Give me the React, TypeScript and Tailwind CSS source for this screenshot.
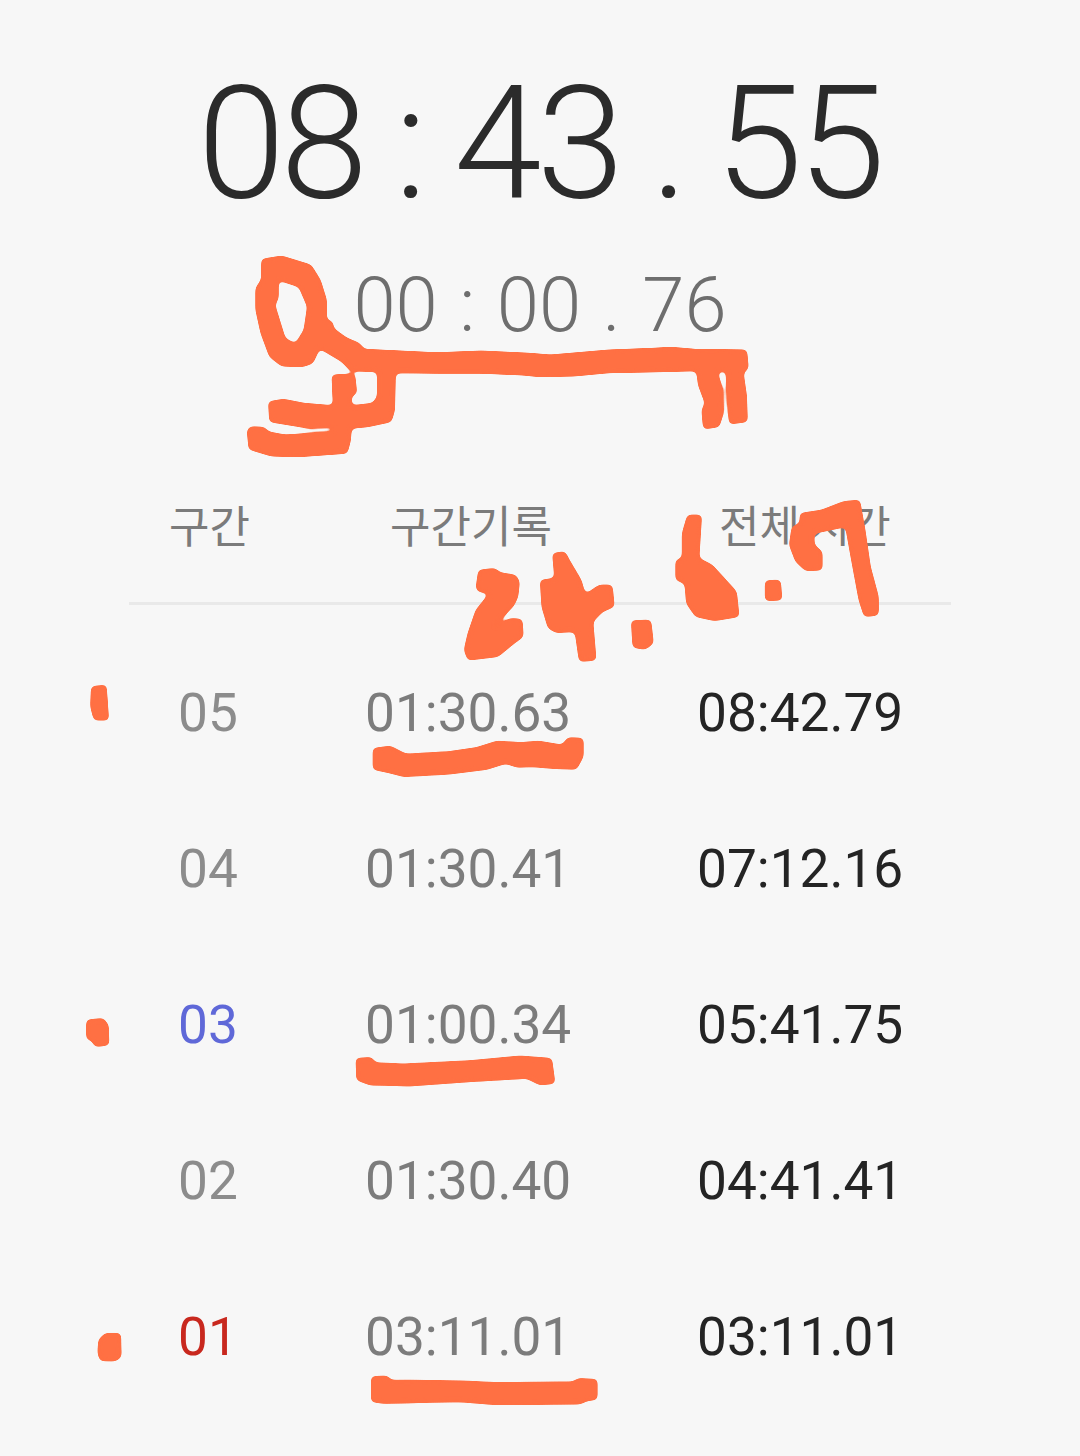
const laps = [
  { no: "05", noColor: "text-[#8c8c8c]", split: "01:30.63", total: "08:42.79" },
  { no: "04", noColor: "text-[#8c8c8c]", split: "01:30.41", total: "07:12.16" },
  { no: "03", noColor: "text-[#5f68d8]", split: "01:00.34", total: "05:41.75" },
  { no: "02", noColor: "text-[#8c8c8c]", split: "01:30.40", total: "04:41.41" },
  { no: "01", noColor: "text-[#c8281e]", split: "03:11.01", total: "03:11.01" },
];

// hand drawn marks on top of the screenshot, traced from the crops
const Scribbles = () => (
  <svg
    className="absolute left-0 top-0 pointer-events-none"
    width="1080"
    height="1456"
    viewBox="0 0 1080 1456"
    fill="#ff7043"
    stroke="#ff7043"
    strokeWidth="3"
    strokeLinejoin="round"
    fillRule="evenodd"
  >
    <defs>
      {/* blur + threshold rounds off the polygon corners like a finger stroke */}
      <filter id="marker" x="0" y="0" width="100%" height="100%" colorInterpolationFilters="sRGB">
        <feGaussianBlur stdDeviation="2.4" />
        <feColorMatrix values="1 0 0 0 0 0 1 0 0 0 0 0 1 0 0 0 0 0 9 -4" />
      </filter>
    </defs>
    <g filter="url(#marker)">
      <g transform="translate(230 240) scale(0.3444 0.3333)">
        <path d="M92 58 L150 48 L235 75 L262 120 L280 180 L280 240 L298 245 L300 265 L340 295 L375 310 L390 328 L600 338 L730 333 L870 340 L930 345 L1100 330 L1230 325 L1280 322 L1350 328 L1500 330 L1505 385 L1490 398 L1500 470 L1502 545 L1450 552 L1445 480 L1440 392 L1415 395 L1430 450 L1432 520 L1420 560 L1375 567 L1370 510 L1380 490 L1360 435 L1355 392 L1250 395 L1100 398 L1000 408 L900 410 L850 405 L730 400 L600 400 L480 398 L478 510 L468 545 L400 560 L352 565 L350 600 L340 640 L200 650 L120 648 L55 628 L50 570 L60 560 L100 562 L110 575 L160 585 L298 575 L300 560 L230 565 L115 545 L112 485 L155 478 L215 490 L300 497 L296 405 L362 402 L368 460 L352 468 L352 497 L415 490 L428 470 L428 395 L350 392 L325 365 L260 325 L240 370 L210 380 L150 378 L115 350 L90 280 L75 210 L75 145 L92 118 Z M140 120 L200 140 L225 200 L215 270 L190 312 L160 295 L130 195 L140 175 Z" />
      </g>
      <g transform="translate(120 490) scale(0.5357 0.3333)">
        <path d="M670 240 L700 235 L708 248 L738 255 L745 275 L742 320 L735 345 L712 385 L695 415 L730 385 L750 388 L752 440 L735 460 L705 500 L650 510 L643 480 L650 430 L665 360 L690 310 L670 305 L665 295 Z" />
        <path d="M808 190 L830 185 L838 210 L860 270 L868 315 L895 285 L918 285 L922 350 L900 365 L882 395 L888 510 L858 515 L850 425 L815 428 L800 415 L788 350 L785 270 L812 265 Z" />
        <path d="M955 392 L990 390 L995 460 L980 478 L958 472 Z" />
        <path d="M1060 75 L1085 75 L1080 205 L1105 225 L1150 305 L1155 380 L1110 392 L1075 380 L1058 340 L1055 280 L1038 270 L1038 210 L1050 205 L1050 130 Z" />
        <path d="M1205 272 L1232 270 L1235 330 L1205 332 Z" />
        <path d="M1270 70 L1310 60 L1350 35 L1380 30 L1390 120 L1400 230 L1415 320 L1415 375 L1390 380 L1380 330 L1365 200 L1355 110 L1295 130 L1295 165 L1310 185 L1310 240 L1280 242 L1262 215 L1250 165 L1255 110 L1270 100 Z" />
      </g>
      <g transform="translate(70 670) scale(0.3444 0.3333)">
        <path d="M62 50 L105 45 L112 150 L70 150 L60 110 Z" />
        <path d="M880 235 L930 228 L975 252 L1100 245 L1180 233 L1240 213 L1310 218 L1360 213 L1430 225 L1445 203 L1490 205 L1490 260 L1470 298 L1400 295 L1340 290 L1300 292 L1265 280 L1210 298 L1100 312 L970 320 L925 308 L880 298 Z" />
      </g>
      <g transform="translate(70 1000) scale(0.3333)">
        <path d="M50 60 L100 55 L115 75 L117 135 L75 140 L65 120 L50 118 Z" />
        <path d="M858 175 L905 172 L915 188 L1000 192 L1200 182 L1350 168 L1445 175 L1455 250 L1410 255 L1370 235 L1200 245 L1020 258 L900 255 L860 240 Z" />
      </g>
      <g transform="translate(80 1320) scale(0.338 0.3333)">
        <path d="M55 60 L75 40 L120 40 L122 110 L105 123 L60 122 L53 100 Z" />
        <path d="M862 170 L910 168 L918 180 L1130 183 L1240 188 L1460 185 L1475 175 L1530 178 L1530 238 L1500 242 L1480 252 L1240 255 L1120 245 L900 250 L862 245 Z" />
      </g>
    </g>
  </svg>
);

export default function App() {
  return (
    <div className="relative w-[1080px] h-[1456px] overflow-hidden bg-[#f7f7f7] font-['Roboto','Noto_Sans_CJK_KR',sans-serif]">
      <div className="pt-[49px] flex flex-col items-center">
        <div className="h-[188px] pr-[2px] text-[158px] leading-[188px] font-light tracking-[-5px] [word-spacing:-2px] text-[#2b2b2b] whitespace-pre">
          08 : 43 . 55
        </div>
        <div className="mt-[23px] h-[90px] text-[76px] leading-[90px] font-light [word-spacing:3px] text-[#6e6e6e] whitespace-pre">
          00 : 00 . 76
        </div>
      </div>

      <div className="mt-[144px] mx-[129px]">
        <div className="flex h-[60px] items-center text-[44px] leading-[59px] text-[#7b7b7b] font-['Noto_Sans_CJK_KR',sans-serif] font-normal">
          <div className="w-[261px] pl-[40px]">구간</div>
          <div className="w-[329px]">구간기록</div>
          <div>전체 시간</div>
        </div>
        <div className="mt-[48px] h-[3px] bg-[#e9e9e9]" />
      </div>

      <div className="mt-[30px] pl-[178px]">
        {laps.map((lap) => (
          <div key={lap.no} className="flex h-[156px] items-center text-[53.2px] leading-[156px]">
            <div className={`w-[187px] ${lap.noColor}`}>{lap.no}</div>
            <div className="w-[332px] text-[#7c7c7c]">{lap.split}</div>
            <div className="text-[#242424]">{lap.total}</div>
          </div>
        ))}
      </div>

      <Scribbles />
    </div>
  );
}
